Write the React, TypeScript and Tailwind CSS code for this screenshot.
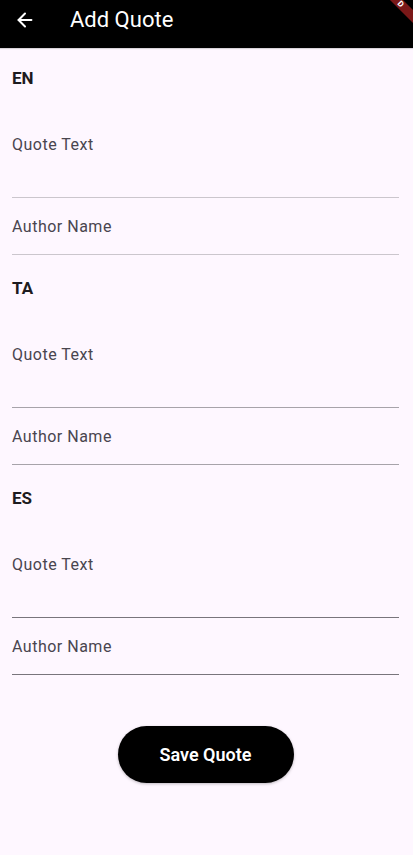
import { ArrowLeft } from "lucide-react";

const SECTIONS = [
  { code: "EN", line: "border-[#cbc6cd]" },
  { code: "TA", line: "border-[#a7a3aa]" },
  { code: "ES", line: "border-[#79757c]" },
];

function Field({ label, tall, line }: { label: string; tall?: boolean; line: string }) {
  return (
    <div
      className={`border-b ${line} ${tall ? "h-[108px] pt-[43px]" : "h-[57px] pt-[17px]"}`}
    >
      <p className="text-[16px] leading-[24px] tracking-[0.5px] text-[#49454f]">{label}</p>
    </div>
  );
}

export default function App() {
  return (
    <div
      className="relative w-[413px] h-[855px] overflow-hidden bg-[#fef7ff]"
      style={{ fontFamily: "Roboto, 'Liberation Sans', sans-serif" }}
    >
      {/* App bar */}
      <header className="h-12 bg-black flex items-start pt-2 shadow-[0_1px_1px_rgba(0,0,0,0.15)]">
        <div className="w-[49px] h-6 flex items-center justify-center">
          <ArrowLeft className="w-[22px] h-[22px] text-white" strokeWidth={2.2} />
        </div>
        <h1 className="ml-[21px] text-white text-[22px] leading-6">Add Quote</h1>
      </header>

      {/* debug banner corner */}
      <svg className="absolute top-0 right-0" width="30" height="26" viewBox="0 0 30 26">
        <polygon points="7,0 20,0 30,10 30,23" fill="#7a1818" />
        <text x="14" y="4" fill="#fff" fontSize="8" fontWeight="700" transform="rotate(45 14 4)">D</text>
      </svg>

      <main className="pl-3 pr-[14px] pt-[18px]">
        {SECTIONS.map((s, i) => (
          <section key={s.code} className={i > 0 ? "mt-[21px]" : ""}>
            <h2 className="text-[17px] leading-6 font-bold text-[#1d1b20]">{s.code}</h2>
            <Field label="Quote Text" tall line={s.line} />
            <Field label="Author Name" line={s.line} />
          </section>
        ))}

        <div className="flex justify-center mt-[51px]">
          <button className="w-[176px] h-[57px] rounded-full bg-black text-white text-[18px] font-semibold shadow-[0_1px_3px_rgba(0,0,0,0.25)]">
            Save Quote
          </button>
        </div>
      </main>
    </div>
  );
}
